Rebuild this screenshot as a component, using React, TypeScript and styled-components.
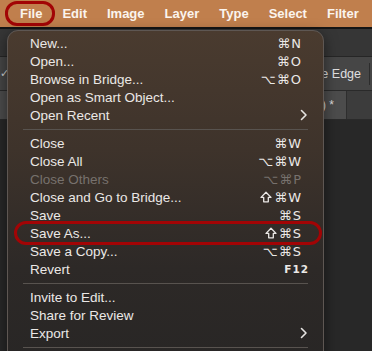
import React from "react";
import styled, { createGlobalStyle } from "styled-components";

const GlobalStyle = createGlobalStyle`
	html, body {
		margin: 0;
		padding: 0;
		background: #262626;
	}
	body {
		font-family: "Liberation Sans", "DejaVu Sans", sans-serif;
		-webkit-font-smoothing: antialiased;
	}
`;

type Item = {
	label?: string;
	keys?: string;
	shift?: boolean;
	sep?: boolean;
	disabled?: boolean;
	submenu?: boolean;
	small?: boolean;
	marked?: boolean;
};

const items: Item[] = [
	{ label: "New...", keys: "⌘N" },
	{ label: "Open...", keys: "⌘O" },
	{ label: "Browse in Bridge...", keys: "⌥⌘O" },
	{ label: "Open as Smart Object..." },
	{ label: "Open Recent", submenu: true },
	{ sep: true },
	{ label: "Close", keys: "⌘W" },
	{ label: "Close All", keys: "⌥⌘W" },
	{ label: "Close Others", keys: "⌥⌘P", disabled: true },
	{ label: "Close and Go to Bridge...", keys: "⌘W", shift: true },
	{ label: "Save", keys: "⌘S" },
	{ label: "Save As...", keys: "⌘S", shift: true, marked: true },
	{ label: "Save a Copy...", keys: "⌥⌘S" },
	{ label: "Revert", keys: "F12", small: true },
	{ sep: true },
	{ label: "Invite to Edit..." },
	{ label: "Share for Review" },
	{ label: "Export", submenu: true },
	{ sep: true },
];

const menus = ["File", "Edit", "Image", "Layer", "Type", "Select", "Filter"];

const ShiftIcon = () => (
	<ShiftSvg viewBox="0 0 12 12" width="12" height="12">
		<path
			d="M6 1.2 L11 6.4 L8.3 6.4 L8.3 10.8 L3.7 10.8 L3.7 6.4 L1 6.4 Z"
			fill="none"
			stroke="currentColor"
			strokeWidth="1.3"
			strokeLinejoin="round"
		/>
	</ShiftSvg>
);

const App = () => {
	return (
		<>
			<GlobalStyle />
			<Screen>
				<MenuBar>
					{menus.map((m, i) => (
						<MenuTitle key={m} circled={i === 0}>
							{m}
						</MenuTitle>
					))}
				</MenuBar>
				<Workspace>
					<AppBar />
					<OptionsBar>
						<Check>✓</Check>
						<OptionText>Refine Edge</OptionText>
						<Divider />
					</OptionsBar>
					<TabBar>
						<DocTab>Untitled-1 @ 100% (Layer 1, RGB/8) *</DocTab>
					</TabBar>
					<Canvas />
					<Dropdown>
						{items.map((it, i) =>
							it.sep ? (
								<Separator key={i} />
							) : (
								<Row key={i} disabled={it.disabled} marked={it.marked}>
									<Label>{it.label}</Label>
									{it.shift && <ShiftIcon />}
									{it.keys && <Keys small={it.small}>{it.keys}</Keys>}
									{it.submenu && (
										<Chevron viewBox="0 0 8 12" width="8" height="12">
											<path
												d="M1.5 1.5 L6 6 L1.5 10.5"
												fill="none"
												stroke="#e6e4e2"
												strokeWidth="1.6"
												strokeLinecap="round"
												strokeLinejoin="round"
											/>
										</Chevron>
									)}
								</Row>
							)
						)}
					</Dropdown>
				</Workspace>
			</Screen>
		</>
	);
};

const Screen = styled.div`
	width: 372px;
	height: 351px;
	overflow: hidden;
	display: flex;
	flex-direction: column;
	background: #262626;
`;

const MenuBar = styled.div`
	display: flex;
	align-items: center;
	gap: 20px;
	height: 27px;
	padding-left: 20px;
	background: #c07f4d;
	flex-shrink: 0;
	overflow: hidden;
`;

const MenuTitle = styled.div<{ circled: boolean }>`
	position: relative;
	color: #fbf4ee;
	font-size: 13px;
	font-weight: 700;
	line-height: 27px;
	white-space: nowrap;
	${(props) =>
		props.circled &&
		`
		&::after {
			content: "";
			position: absolute;
			left: -15px;
			right: -13px;
			top: 1px;
			bottom: 1px;
			border: 3px solid #a20405;
			border-radius: 12px;
		}
	`}
`;

const Workspace = styled.div`
	position: relative;
	flex: 1;
	display: flex;
	flex-direction: column;
	border-top: 2px solid #151515;
`;

const AppBar = styled.div`
	height: 27px;
	background: #363636;
	border-bottom: 1px solid #262626;
`;

const OptionsBar = styled.div`
	display: flex;
	align-items: center;
	justify-content: flex-end;
	height: 33px;
	padding-right: 2px;
	background: #464646;
	border-bottom: 1px solid #2a2a2a;
`;

const Check = styled.span`
	margin-right: auto;
	color: #cfcfcf;
	font-size: 11px;
`;

const OptionText = styled.span`
	color: #e0e0e0;
	font-size: 12.5px;
`;

const Divider = styled.div`
	width: 1px;
	height: 22px;
	margin-left: 8px;
	background: #2c2c2c;
`;

const TabBar = styled.div`
	display: flex;
	height: 28px;
	background: #3c3c3c;
	border-bottom: 1px solid #2a2a2a;
`;

const DocTab = styled.div`
	width: 347px;
	box-sizing: border-box;
	padding-right: 12px;
	text-align: right;
	line-height: 28px;
	background: #4c4c4c;
	border-right: 1px solid #2e2e2e;
	color: #dedede;
	font-size: 12px;
	white-space: nowrap;
	overflow: hidden;
`;

const Canvas = styled.div`
	flex: 1;
	background: #282828;
`;

const Dropdown = styled.div`
	position: absolute;
	top: 1px;
	left: 7px;
	width: 317px;
	height: 340px;
	box-sizing: border-box;
	padding-top: 3px;
	border: 1px solid #5e5753;
	border-radius: 11px;
	background: linear-gradient(
		to bottom,
		#4a3b2f 0%,
		#3e332b 35%,
		#2d2927 70%,
		#282625 100%
	);
	box-shadow: 0 4px 14px rgba(0, 0, 0, 0.5);
	display: flex;
	flex-direction: column;
`;

const Row = styled.div<{ disabled?: boolean; marked?: boolean }>`
	position: relative;
	display: flex;
	align-items: center;
	height: 18px;
	padding: 0 21px 0 22px;
	color: ${(props) => (props.disabled ? "#77716d" : "#ebe8e6")};
	font-size: 13.5px;
	${(props) =>
		props.marked &&
		`
		&::after {
			content: "";
			position: absolute;
			left: 6px;
			right: 1px;
			top: -3px;
			bottom: -3px;
			border: 3px solid #a20405;
			border-radius: 13px;
		}
	`}
`;

const Label = styled.span`
	flex: 1;
	white-space: nowrap;
`;

const ShiftSvg = styled.svg`
	margin-right: 2px;
`;

const Keys = styled.span<{ small?: boolean }>`
	font-family: "DejaVu Sans", sans-serif;
	letter-spacing: 1px;
	font-size: ${(props) => (props.small ? "10.5px" : "13px")};
	font-weight: ${(props) => (props.small ? 700 : 400)};
	margin-right: ${(props) => (props.small ? "-7px" : "0")};
`;

const Chevron = styled.svg`
	margin-right: -6px;
`;

const Separator = styled.div`
	height: 1px;
	margin: 4.5px 15px 4.5px 15px;
	background: #58534f;
`;

export default App;
